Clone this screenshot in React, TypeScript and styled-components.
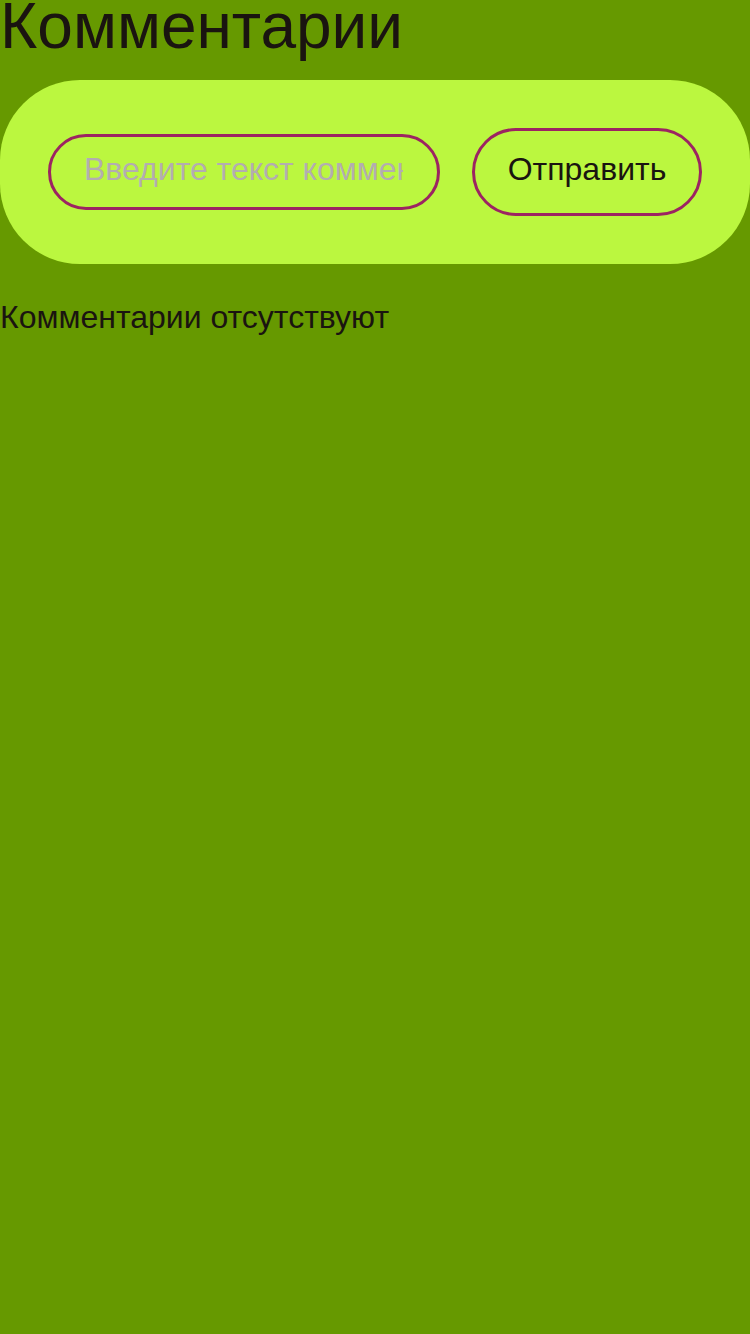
import React, { useState } from "react";
import styled, { createGlobalStyle } from "styled-components";

const GlobalStyle = createGlobalStyle`
  html, body {
    margin: 0;
    padding: 0;
    background: #669900;
  }
  body {
    font-family: "Liberation Sans", Arial, sans-serif;
    color: #1a1410;
  }
`;

const Page = styled.div`
  min-height: 1334px;
  background: #669900;
`;

const Title = styled.h1`
  margin: 0;
  font-size: 64px;
  font-weight: 400;
  line-height: 52px;
  color: #1a1410;
`;

const FormCard = styled.form`
  margin-top: 28px;
  display: flex;
  align-items: center;
  gap: 32px;
  padding: 48px;
  background: #bbf73f;
  border-radius: 80px;
`;

const CommentInput = styled.input`
  flex: 1;
  min-width: 0;
  height: 76px;
  box-sizing: border-box;
  padding: 0 34px 5px 33px;
  font-family: "Liberation Sans", Arial, sans-serif;
  font-size: 32px;
  color: #1a1410;
  background: transparent;
  border: 3px solid #9c2462;
  border-radius: 38px;
  outline: none;

  &::placeholder {
    color: #b3adb0;
    opacity: 1;
  }
`;

const SendButton = styled.button`
  height: 88px;
  width: 230px;
  box-sizing: border-box;
  padding: 0 30px 5px;
  font-family: "Liberation Sans", Arial, sans-serif;
  font-size: 32px;
  color: #1a1410;
  background: transparent;
  border: 3px solid #9c2462;
  border-radius: 44px;
  cursor: pointer;
`;

const EmptyText = styled.p`
  margin: 35px 0 0;
  font-size: 32px;
  line-height: 36px;
  color: #1a1410;
`;

export default function App() {
  const [text, setText] = useState("");
  const [comments, setComments] = useState<string[]>([]);

  const handleSubmit = (e: React.FormEvent) => {
    e.preventDefault();
    if (!text.trim()) return;
    setComments((prev) => [...prev, text.trim()]);
    setText("");
  };

  return (
    <Page>
      <GlobalStyle />
      <Title>Комментарии</Title>
      <FormCard onSubmit={handleSubmit}>
        <CommentInput
          value={text}
          onChange={(e) => setText(e.target.value)}
          placeholder="Введите текст комментария"
        />
        <SendButton type="submit">Отправить</SendButton>
      </FormCard>
      {comments.length === 0 ? (
        <EmptyText>Комментарии отсутствуют</EmptyText>
      ) : (
        comments.map((c, i) => <EmptyText key={i}>{c}</EmptyText>)
      )}
    </Page>
  );
}
